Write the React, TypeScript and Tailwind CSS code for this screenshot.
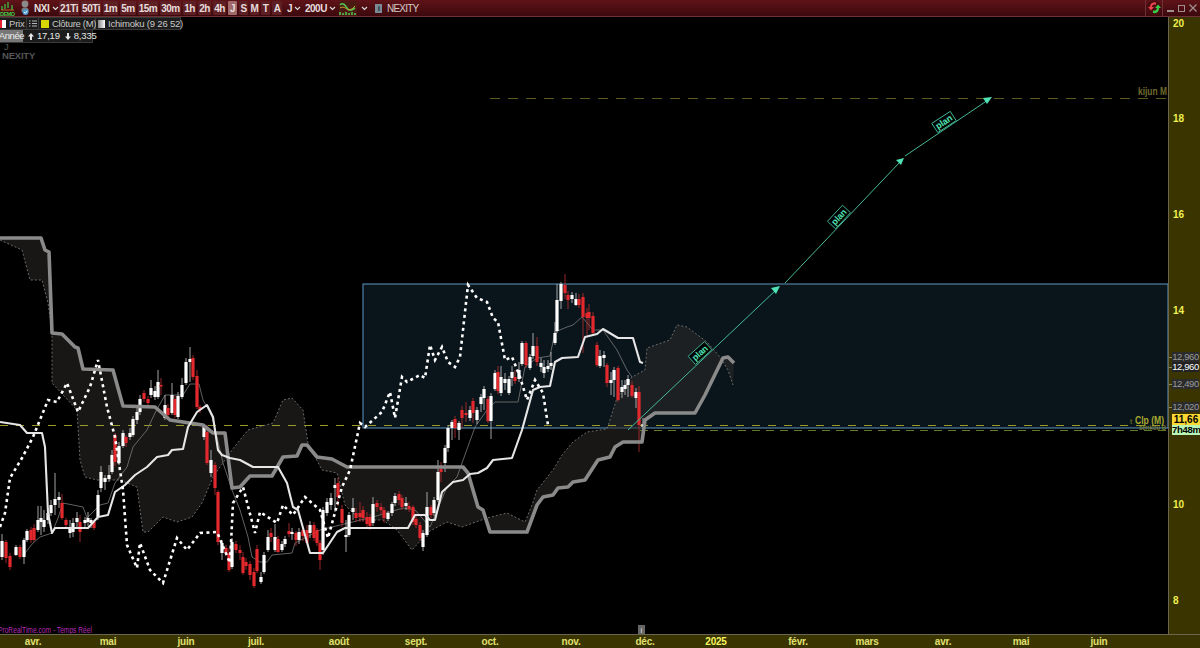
import React from "react";

type C = [number, number, number, "r" | "w", number?, number?];

const candles: C[] = [
  [2,541,557,"w",534,560],[6,542,558,"r",540,563],[10,556,567,"r",553,570],[16,547,555,"w",545,556],[20,547,557,"r",545,559],[24,540,557,"w",538,564],[27,531,540,"w",529,542],[31,530,540,"r",527,543],[34,528,540,"r",524,542],[38,520,530,"w",506,532],[41,518,522,"w",506,535],[44,520,527,"w",510,532],[48,513,520,"w",508,524],[51,505,513,"w",500,516],[55,499,505,"w",473,515],[59,497,500,"w",492,508],[62,503,518,"r",494,520],[66,520,525,"r",518,528],[70,528,533,"w",520,538],[73,523,532,"w",518,537],[77,518,522,"w",512,527],[80,522,532,"r",515,542],[85,520,523,"w",517,528],[88,518,522,"w",512,526],[91,520,523,"w",518,528],[94,522,528,"r",520,530],[98,495,517,"w",490,520],[101,472,488,"w",466,492],[105,478,482,"w",475,490],[109,475,479,"w",465,482],[112,455,472,"w",450,474],[115,435,462,"r",433,466],[119,446,463,"w",442,465],[123,433,446,"w",430,448],[126,437,443,"r",435,447],[130,433,437,"w",428,440],[133,419,435,"w",416,437],[137,412,420,"w",408,424],[140,399,412,"w",395,415],[144,393,399,"r",390,402],[148,399,403,"r",396,407],[151,388,395,"w",380,398],[155,391,397,"w",386,400],[158,382,397,"w",370,399],
  [161,385,386,"r",378,395],[165,405,418,"w",395,420],[168,408,415,"r",404,420],[172,395,413,"w",383,415],[175,399,415,"r",396,418],[178,396,417,"w",392,419],[182,385,397,"w",378,399],[186,362,383,"w",358,385],[190,359,362,"w",347,382],[193,358,377,"r",355,380],[197,376,407,"r",370,409],[200,407,410,"r",405,413],[204,427,437,"w",425,440],[207,432,463,"r",425,465],[211,460,473,"w",450,477],[215,465,488,"r",462,495],[218,492,542,"r",490,545],[222,543,553,"w",540,560],[226,548,553,"r",545,556],[229,553,570,"r",548,572],[232,542,567,"w",538,569],[236,544,550,"r",541,553],[240,550,553,"r",545,560],[243,557,573,"r",552,575],[246,562,566,"r",558,570],[250,564,575,"r",561,580],[254,572,586,"r",568,588],[257,549,571,"r",545,573],[261,577,582,"w",572,584],[264,555,572,"w",552,574],[268,537,550,"w",530,552],[271,533,537,"r",528,542],[275,537,550,"w",524,552],[278,539,552,"r",536,553],[282,544,550,"w",541,552],[285,539,544,"w",536,547],[289,531,534,"r",523,537],[292,532,534,"w",528,540],[296,533,540,"r",531,546],[299,532,540,"w",528,544],[303,530,536,"r",528,541],[307,530,543,"r",525,545],[310,525,533,"w",521,538],[314,525,538,"r",522,541],[317,530,543,"r",528,546],
  [320,543,560,"r",540,570],[323,510,550,"w",507,555],[327,502,513,"w",498,516],[331,498,505,"w",493,510],[335,485,488,"w",478,512],[338,483,497,"r",478,506],[342,509,523,"r",505,527],[346,535,537,"w",520,552],[349,515,535,"w",512,537],[353,508,512,"w",498,520],[356,513,518,"r",508,522],[360,513,517,"r",502,522],[363,510,518,"r",506,522],[367,517,524,"r",512,527],[370,517,526,"r",514,530],[373,504,523,"w",497,526],[377,503,507,"r",500,512],[381,507,510,"r",503,515],[384,510,518,"r",507,523],[388,513,519,"w",511,521],[392,504,513,"w",502,516],[395,496,503,"w",493,506],[399,494,500,"r",491,505],[402,498,507,"r",495,510],[406,503,506,"w",497,510],[409,506,509,"r",502,512],[413,507,522,"r",505,525],[416,519,525,"r",516,528],[420,525,538,"r",522,541],[423,533,547,"w",530,551],[427,507,535,"w",492,537],[431,507,515,"r",505,518],[434,500,513,"w",497,516],[438,472,500,"w",460,502],[441,469,472,"r",462,482],[445,448,463,"w",445,472],[448,428,448,"w",425,452],[452,422,428,"w",420,440],[455,419,428,"r",416,438],[459,423,430,"w",421,440],
  [462,410,418,"r",406,428],[466,413,415,"r",402,422],[470,410,418,"w",406,421],[473,401,413,"r",398,423],[477,410,420,"w",407,424],[481,397,404,"w",394,412],[484,389,398,"w",386,410],[488,399,421,"r",396,423],[491,396,421,"w",393,439],[495,373,389,"w",370,391],[498,372,391,"r",366,394],[501,377,393,"w",366,396],[505,379,383,"w",373,390],[509,379,393,"w",376,395],[512,372,378,"w",366,386],[515,377,381,"r",370,384],[519,370,379,"w",362,382],[522,343,364,"w",341,366],[526,343,365,"r",341,368],[530,357,368,"w",354,370],[533,346,356,"w",333,359],[537,346,362,"r",337,366],[541,363,367,"w",358,372],[544,367,373,"w",360,378],[548,366,369,"w",360,372],[551,363,366,"w",352,370],[555,333,343,"w",322,345],[557,300,331,"w",284,333],[561,284,301,"w",282,309],[565,285,293,"r",274,299],[568,295,300,"r",291,309],[572,295,299,"w",292,303],[576,299,305,"w",293,306],[579,299,305,"r",294,308],[583,297,317,"r",293,353],[587,313,318,"r",308,335],[589,312,318,"r",304,330],[593,316,333,"r",312,336],[597,345,365,"r",342,367],[600,356,366,"w",350,368],[604,355,358,"w",351,367],[607,365,383,"r",363,387],[611,380,383,"w",372,395],[614,370,380,"w",367,397],[618,368,400,"r",366,402],[622,387,392,"w",380,398],[625,385,389,"w",380,395],[628,379,385,"w",375,397],[632,385,396,"r",381,398],[636,392,398,"w",388,408],[639,392,425,"r",386,452],[643,424,427,"w",418,431],
];

const toP = (a: number[][]) => a.map((p) => p.join(",")).join(" ");

const thick = [[0,238],[41,238],[45,250],[49,252],[52,333],[62,334],[75,347],[78,348],[83,369],[113,370],[123,406],[155,407],[170,420],[203,425],[213,433],[225,433],[232,488],[240,487],[250,476],[272,476],[283,457],[297,456],[302,445],[307,445],[317,457],[332,459],[347,467],[463,467],[468,473],[478,507],[483,510],[490,532],[527,532],[537,505],[543,497],[553,495],[558,488],[568,487],[573,482],[585,480],[598,460],[610,457],[615,447],[623,442],[642,442],[645,420],[655,413],[695,413],[705,395],[723,358],[728,357],[734,363]];
const span = [[0,240],[22,250],[30,280],[42,280],[48,303],[52,330],[52,383],[77,410],[80,460],[85,477],[97,480],[120,480],[137,487],[143,532],[148,532],[163,517],[177,522],[192,517],[202,503],[213,477],[232,450],[248,430],[273,423],[283,400],[292,398],[303,410],[308,443],[322,470],[337,473],[345,505],[360,520],[383,520],[397,530],[412,550],[423,538],[428,532],[447,522],[462,527],[487,518],[507,513],[525,522],[532,505],[537,490],[553,470],[562,455],[573,442],[587,432],[607,429],[617,398],[632,377],[645,370],[647,348],[670,340],[677,325],[687,327],[707,342],[720,357],[728,370],[733,385]];
const tenkan = [[0,422],[20,425],[27,433],[42,433],[45,447],[48,513],[52,533],[55,528],[88,528],[98,517],[108,515],[115,492],[125,485],[135,475],[147,467],[157,457],[168,455],[172,450],[183,449],[188,427],[197,412],[207,405],[213,417],[218,450],[222,455],[230,458],[240,460],[253,467],[278,467],[287,483],[293,507],[298,510],[310,553],[323,553],[337,532],[345,528],[408,528],[415,515],[425,515],[430,520],[435,520],[442,492],[453,482],[463,480],[470,474],[478,473],[487,468],[493,460],[512,458],[522,430],[533,390],[540,387],[550,386],[555,362],[562,358],[578,357],[585,337],[597,334],[603,329],[618,338],[633,338],[640,362],[643,363]];
const chikou = [[0,527],[5,513],[10,478],[22,458],[33,437],[48,400],[57,402],[67,383],[78,412],[90,387],[98,360],[107,407],[115,437],[123,490],[127,545],[137,568],[140,543],[150,570],[163,583],[177,538],[187,550],[200,533],[217,532],[230,563],[233,503],[243,487],[255,533],[260,512],[277,523],[283,505],[293,515],[305,497],[320,510],[328,538],[342,487],[350,470],[360,423],[365,427],[382,412],[390,392],[395,418],[402,377],[407,382],[420,375],[425,378],[430,345],[435,360],[442,347],[448,362],[455,367],[460,357],[468,285],[477,298],[487,302],[493,318],[498,322],[505,360],[512,357],[520,377],[527,400],[535,380],[543,393],[548,425]];
const thin = [[25,553],[33,543],[40,537],[52,533],[58,518],[63,503],[83,507],[87,518],[100,505],[108,503],[115,483],[127,467],[133,447],[147,430],[155,413],[165,395],[183,395],[190,384],[199,384],[203,400],[207,407],[212,417],[217,437],[223,463],[232,490],[240,510],[248,537],[252,557],[260,562],[267,562],[272,555],[292,553],[295,543],[305,538],[320,530],[340,525],[373,517],[403,508],[415,510],[430,527],[447,487],[457,477],[475,427],[487,410],[495,402],[518,402],[525,367],[537,358],[550,356],[555,332],[567,327],[573,325],[582,317],[593,330],[603,330],[617,350],[627,370],[632,377]];

const Plan = ({ x, y, r }: { x: number; y: number; r: number }) => (
  <g transform={`translate(${x} ${y}) rotate(${r})`}>
    <rect x={-11} y={-5.5} width={22} height={11} fill="#000" stroke="#3fb897" strokeWidth={0.9} />
    <text x={0} y={3} textAnchor="middle" fontSize={9} fontWeight={700} fill="#4fe3b5" textLength={18} fontFamily="'Liberation Sans', sans-serif">plan</text>
  </g>
);

const Chart = () => (
  <svg viewBox="0 17 1168 617" className="block w-full h-full">
    <rect x={363} y={284} width={805} height={144} fill="#0a151b" stroke="#5f9ac4" strokeWidth={1} />
    <polygon points={toP([...thick, ...[...span].reverse()])} fill="#2c2a28" fillOpacity={0.55} />
    <polyline points={toP(span)} fill="none" stroke="#6a6a6a" strokeWidth={1} strokeDasharray="2 2" />
    <line x1={0} y1={425.5} x2={1168} y2={425.5} stroke="#9a9a28" strokeWidth={1} strokeDasharray="8 8" />
    <line x1={640} y1={430.5} x2={1168} y2={430.5} stroke="#5f7a28" strokeWidth={1} strokeDasharray="8 6" />
    <line x1={490} y1={98.5} x2={1168} y2={98.5} stroke="#5e5a22" strokeWidth={1} strokeDasharray="10 8" />
    <polyline points={toP(thin)} fill="none" stroke="#7a7a7a" strokeWidth={0.8} />
    {candles.map(([x, t, b, c, wt, wb], i) => (
      <g key={i}>
        <line x1={x} x2={x} y1={wt ?? t} y2={wb ?? b} stroke={c === "r" ? "#a92a2e" : "#b5b5b5"} strokeWidth={0.9} />
        <rect x={x - 1.6} y={t} width={3.2} height={Math.max(b - t, 1.5)} fill={c === "r" ? "#e3282e" : "#ffffff"} />
      </g>
    ))}
    <polyline points={toP(thick)} fill="none" stroke="#8a8a8a" strokeWidth={3.6} strokeLinejoin="round" />
    <polyline points={toP(tenkan)} fill="none" stroke="#e6e6e6" strokeWidth={2.1} strokeLinejoin="round" />
    <polyline points={toP(chikou)} fill="none" stroke="#ffffff" strokeWidth={2.6} strokeDasharray="3 3.5" />
    <g stroke="#45b998" strokeWidth={1}>
      <line x1={628} y1={430} x2={776} y2={290} />
      <line x1={785} y1={283} x2={900} y2={162} />
      <line x1={905} y1={156} x2={988} y2={100} />
    </g>
    <g fill="#4fe3b5">
      <polygon points="780,286 771,288 776,294" />
      <polygon points="904,158 896,160 901,165" />
      <polygon points="992,97 983,98 987,104" />
    </g>
    <Plan x={700} y={353} r={-42} />
    <Plan x={839} y={217} r={-47} />
    <Plan x={944} y={122} r={-33} />
    <text x={1138} y={95} fontSize={10} fontWeight={700} fill="#6e6a2c" textLength={29} lengthAdjust="spacingAndGlyphs" fontFamily="'Liberation Sans', sans-serif">kijun M</text>
    <text x={1130} y={424} fontSize={8} fill="#7d7d22" fontFamily="'Liberation Sans', sans-serif">t</text>
    <text x={1139} y={429.500} fontSize={7} fill="#8a8a30" textLength={27} lengthAdjust="spacingAndGlyphs" fontFamily="'Liberation Sans', sans-serif">senkou B</text>
    <text x={1135} y={424} fontSize={10} fontWeight={700} fill="#a8a830" textLength={29} lengthAdjust="spacingAndGlyphs" fontFamily="'Liberation Sans', sans-serif">Clp (M)</text>
    <text x={-2} y={633} fontSize={8.5} fill="#b52cb5" textLength={94} lengthAdjust="spacingAndGlyphs" fontFamily="'Liberation Sans', sans-serif">ProRealTime.com - Temps Réel</text>
    <rect x={638} y={625} width={7} height={9} fill="#666" />
    <text x={641.5} y={632.5} fontSize={8} textAnchor="middle" fill="#ddd" fontFamily="'Liberation Sans', sans-serif">i</text>
  </svg>
);

const Chevron = () => (
  <svg width="7" height="5" viewBox="0 0 7 5" className="shrink-0"><path d="M1 1l2.5 2.5L6 1" fill="none" stroke="#ddd" strokeWidth="1.1" /></svg>
);

const tfs: [string, string][] = [
  ["21Ti","w-[20px]"],["50Ti","w-[20px]"],["1m","w-[15px]"],["5m","w-[16px]"],["15m","w-[20px]"],["30m","w-[21px]"],["1h","w-[13px]"],["2h","w-[13px]"],["4h","w-[13px]"],["J","w-[9px] bg-[#a06a6a]"],["S","w-[9px]"],["M","w-[9px]"],["T","w-[9px]"],["A","w-[10px]"],
];

const Header = () => (
  <header className="h-[17px] shrink-0 flex items-center bg-gradient-to-b from-[#5f1318] to-[#3c090d] border-b border-[#6e3236] text-[#e6dcdc] text-[10px] font-bold tracking-[-0.5px]">
    <svg width="17" height="15" viewBox="0 0 17 15" className="shrink-0">
      <g stroke="#3fae3f" strokeWidth="1.4"><path d="M2 9V5M5 8V3M8 7V1M12 9V4" /></g>
      <path d="M1 9h13" stroke="#d08030" strokeWidth="0.8" />
      <text x="0" y="14.5" fontSize="5.5" fontWeight="700" fill="#45c94b" fontFamily="'Liberation Sans', sans-serif">DEMO</text>
    </svg>
    <svg width="10" height="16" viewBox="0 0 10 16" className="shrink-0 ml-[3px]">
      <circle cx="5" cy="4" r="3.4" fill="#8a8a8a" />
      <path d="M1.5 9c1-2 6-2 7 0v3h-7z" fill="#777" />
      <circle cx="5.500" cy="12" r="3" fill="#4f9ad0" />
      <path d="M4 12l1.200 1.300L7.300 10.700" fill="none" stroke="#fff" strokeWidth="0.9" />
    </svg>
    <div className="ml-[4px] w-[26px] shrink-0 flex items-center gap-[3px]"><span>NXI</span><Chevron /></div>
    <div className="ml-[-1px] flex items-center gap-[2px]">
      {tfs.map(([l, c]) => (
        <span key={l + c} className={`${c} h-[14px] shrink-0 flex items-center justify-center bg-[#5d1f23] rounded-[1px]`}>{l}</span>
      ))}
    </div>
    <div className="ml-[5px] w-[15px] shrink-0 flex items-center gap-[2px]"><span>J</span><Chevron /></div>
    <div className="ml-[3px] w-[30px] shrink-0 flex items-center gap-[2px]"><span>200U</span><Chevron /></div>
    <svg width="18" height="15" viewBox="0 0 18 15" className="shrink-0 ml-[4px]">
      <rect x="0" y="0" width="18" height="15" fill="#4a1a12" />
      <path d="M1 4c3-3 5 0 7 3s4 3 8 0" fill="none" stroke="#4fc24f" strokeWidth="1.6" />
      <path d="M1 7c3-2 5 0 7 1s5 1 8-3" fill="none" stroke="#c9a030" strokeWidth="1" />
      <path d="M1 14v-3M4 14v-2M7 14v-3M10 14v-2M13 14v-3M16 14v-2" stroke="#4fc24f" strokeWidth="1.6" />
    </svg>
    <span className="ml-[3px] w-[8px] shrink-0 flex justify-center"><Chevron /></span>
    <span className="ml-[7px] w-[7px] h-[9px] shrink-0 bg-[#7a8a96] text-[#1a2a33] text-[8px] leading-[9px] text-center">i</span>
    <span className="ml-[5px] font-normal text-[#d5c8c8] text-[10px] tracking-[-0.8px]">NEXITY</span>
    <div className="ml-auto flex items-center">
      <div className="h-[16px] flex items-center border-x border-[#6e3236] mr-[4px]">
        <svg width="16" height="16" viewBox="0 0 16 16" className="shrink-0">
          <circle cx="8" cy="8" r="7.5" fill="#4a0c10" />
          <path d="M10 2.500C6 1.500 4 4 4 7H2l3 3.500L8 7H6c0-2 2-3 4-2z" fill="#e8454d" />
          <path d="M7 13c4 .8 6-1.500 6-5h2l-3-3.500L9 8h2c0 2-2 3-4 2.500z" fill="#35d04a" />
        </svg>
      </div>
      <div className="flex items-center gap-[4px] mr-[3px]">
        <span className="w-[7px] h-[2px] mt-[6px] bg-[#a08f8f]" />
        <span className="w-[7px] h-[7px] border border-[#a08f8f]" />
        <svg width="8" height="8" viewBox="0 0 8 8"><path d="M0.500 0.500l7 7M7.500 0.500l-7 7" stroke="#a08f8f" strokeWidth="1.300" /></svg>
      </div>
    </div>
  </header>
);

const Arrow = ({ down }: { down?: boolean }) => (
  <svg width="6" height="7" viewBox="0 0 6 7" className={`shrink-0 ${down ? "rotate-180" : ""}`}>
    <path d="M3 0L6 3.500H4V7H2V3.500H0z" fill="#e6e6e6" />
  </svg>
);

const Legend = () => (
  <div className="absolute left-0 top-0 text-[9.5px] leading-[12px] text-[#c8c8c8] tracking-[-0.2px] whitespace-nowrap">
    <div className="flex h-[13px] items-stretch">
      <div className="flex items-center w-[27px] bg-[#1c1c1c] border border-[#3a3a3a] border-l-0">
        <span className="w-[2px] h-[8px] shrink-0 bg-[#e3282e]" /><span className="w-[4px] h-[8px] shrink-0 bg-white" />
        <span className="ml-[3px]">Prix</span>
      </div>
      <div className="flex items-center justify-center w-[11px] bg-[#1c1c1c] border-y border-[#3a3a3a]">
        <svg width="8" height="7" viewBox="0 0 8 7"><path d="M0 1h1.500M3 1h5M0 3.500h1.500M3 3.500h5M0 6h1.500M3 6h5" stroke="#b5b5b5" strokeWidth="1" /></svg>
      </div>
      <div className="flex items-center w-[58px] bg-[#1c1c1c] border border-[#3a3a3a] pl-[2px]">
        <span className="w-[8px] h-[8px] shrink-0 bg-[#d8d800]" /><span className="ml-[3px] tracking-[-0.3px]">Clôture (M)</span>
      </div>
      <div className="flex items-center w-[85px] bg-[#1c1c1c] border border-l-0 border-[#3a3a3a] pl-[2px]">
        <span className="w-[7px] h-[8px] shrink-0 bg-gradient-to-r from-[#888] to-white" /><span className="ml-[3px] tracking-[-0.2px]">Ichimoku (9 26 52)</span>
      </div>
    </div>
    <div className="flex h-[13px] items-stretch w-[93px] bg-[#1c1c1c] border border-l-0 border-t-0 border-[#3a3a3a]">
      <span className="w-[23px] shrink-0 bg-[#777] text-[#eee] flex items-center justify-center tracking-[-0.4px]">Année</span>
      <span className="ml-[5px] flex items-center text-[#e6e6e6]"><Arrow /><span className="ml-[3px]">17,19</span><span className="ml-[5px]"><Arrow down /></span><span className="ml-[3px]">8,335</span></span>
    </div>
    <div className="pl-[4px] text-[#555] h-[8px] leading-[8px]">J</div>
    <div className="pl-[2px] text-[#555] h-[10px] leading-[10px] font-bold">NEXITY</div>
  </div>
);

const yLabels: [string, number][] = [["20",24],["18",119],["16",215],["14",311],["10",505],["8",601]];
const xLabels: [string, number, boolean?][] = [["avr.",33],["mai",108],["juin",186],["juil.",256],["août",339],["sept.",416],["oct.",490],["nov.",571],["déc.",645],["2025",716,true],["févr.",798],["mars",867],["avr.",943],["mai",1021],["juin",1099]];

const YAxis = () => (
  <div className="relative w-[32px] shrink-0 bg-[#393400] border-l border-[#6a6650] text-[10px] font-bold text-[#f0f050] whitespace-nowrap">
    {yLabels.map(([l, y]) => (
      <span key={l} className="absolute left-[4px] leading-[10px]" style={{ top: y - 17 - 5 }}>{l}</span>
    ))}
    {([["12,960",357],["12,490",384],["12,020",407]] as [string, number][]).map(([l, y]) => (
      <span key={l} className="absolute left-[3px] h-[10px] w-[27px] bg-[#2b2b2b] text-[#9a9a9a] font-normal text-[9.5px] tracking-[-0.4px] leading-[10px] text-center" style={{ top: y - 17 - 5 }}>{l}</span>
    ))}
    {[357,367,384,407].map((y) => (
      <span key={y} className="absolute left-0 w-[3px] h-[1px] bg-[#8c8860]" style={{ top: y - 17 }} />
    ))}
    <span className="absolute left-[3px] top-[345px] h-[10px] w-[27px] bg-[#222] text-white font-normal text-[9.5px] tracking-[-0.4px] leading-[10px] text-center">12,960</span>
    <span className="absolute left-[3px] top-[397px] h-[11px] w-[28px] bg-[#fbd834] text-black leading-[11px] text-center">11,66</span>
    <span className="absolute left-[3px] top-[408px] h-[10px] w-[28px] bg-[#b8f5b4] text-black text-[9.5px] tracking-[-0.3px] leading-[10px] text-center">7h48m</span>
  </div>
);

export default function App() {
  return (
    <div className="w-[1200px] h-[648px] overflow-hidden bg-black flex flex-col font-['Liberation_Sans',sans-serif]">
      <Header />
      <div className="flex-1 min-h-0 flex">
        <main className="relative flex-1 min-w-0">
          <Chart />
          <Legend />
        </main>
        <YAxis />
      </div>
      <footer className="relative h-[14px] shrink-0 bg-[#393400] border-t border-[#6a6650] text-[10px] font-bold text-[#e0e070]">
        {xLabels.map(([l, x, b]) => (
          <span key={l + x} className={`absolute top-[1px] leading-[12px] -translate-x-1/2 tracking-[-0.2px] ${b ? "text-[#f5f560]" : ""}`} style={{ left: x }}>{l}</span>
        ))}
      </footer>
    </div>
  );
}
